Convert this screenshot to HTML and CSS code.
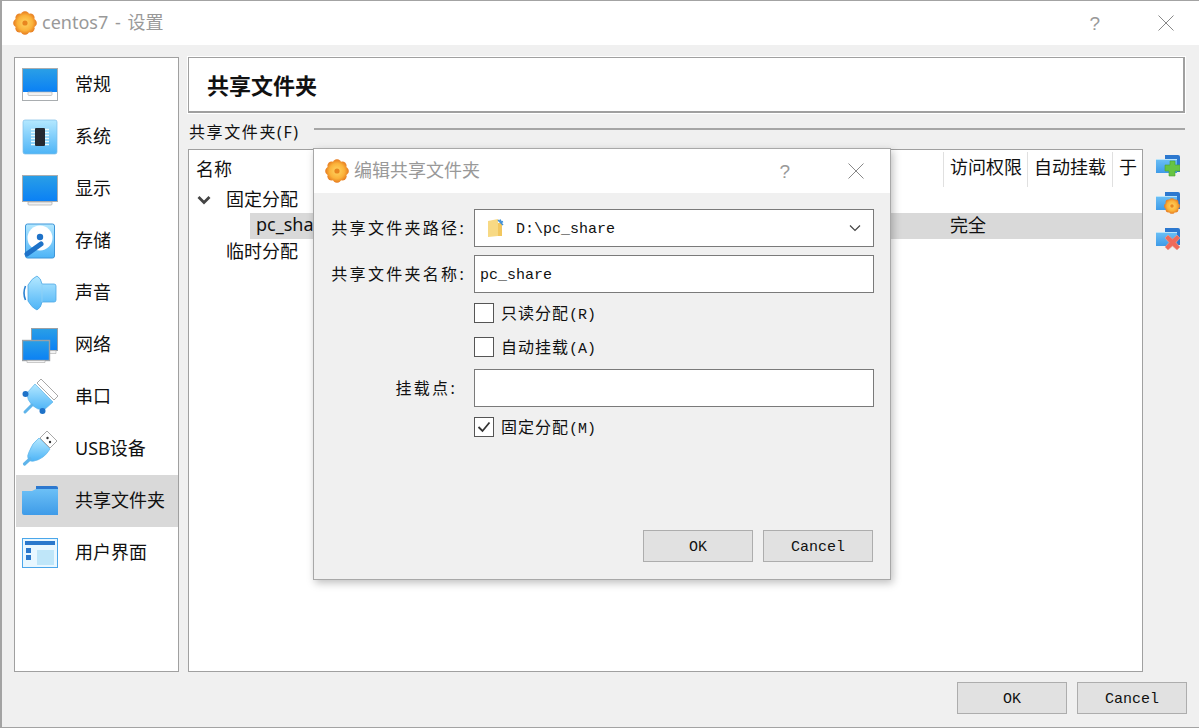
FILE: index.html
```html
<!DOCTYPE html>
<html lang="zh-CN">

<head>
  <meta charset="UTF-8">
  <title>centos7 - 设置</title>
  <link rel="stylesheet" href="styles.css">
</head>

<body>
  <svg class="defs" width="0" height="0">
    <defs>
      <linearGradient id="screen" x1="0" y1="0" x2="0" y2="1">
        <stop offset="0" stop-color="#2a9fe6" />
        <stop offset="1" stop-color="#0a80f5" />
      </linearGradient>
      <linearGradient id="light" x1="0" y1="0" x2="0" y2="1">
        <stop offset="0" stop-color="#b4e8ff" />
        <stop offset="1" stop-color="#4db4f7" />
      </linearGradient>
      <linearGradient id="folderfront" x1="0" y1="0" x2="0" y2="1">
        <stop offset="0" stop-color="#6cc0f6" />
        <stop offset="1" stop-color="#3e9be8" />
      </linearGradient>
      <radialGradient id="petal" gradientUnits="userSpaceOnUse" cx="12" cy="12" r="12.500">
        <stop offset="0" stop-color="#ffd663" />
        <stop offset="0.6" stop-color="#fbb23a" />
        <stop offset="1" stop-color="#e2701a" />
      </radialGradient>
      <symbol id="gear" viewBox="0 0 24 24">
        <g fill="url(#petal)">
          <circle cx="12" cy="12" r="10" />
          <circle cx="12" cy="4.500" r="4.300" />
          <circle cx="12" cy="19.500" r="4.300" />
          <circle cx="4.500" cy="12" r="4.300" />
          <circle cx="19.500" cy="12" r="4.300" />
          <circle cx="6.700" cy="6.700" r="4.300" />
          <circle cx="17.300" cy="6.700" r="4.300" />
          <circle cx="6.700" cy="17.300" r="4.300" />
          <circle cx="17.300" cy="17.300" r="4.300" />
        </g>
        <circle cx="12" cy="12" r="2.600" fill="#e8861f" />
      </symbol>
      <symbol id="toolfolder" viewBox="0 0 24 24">
        <path d="M9 2h13q2 0 2 2v15H9z" fill="#2c78cf" />
        <path d="M0 6h21v14H0z" fill="url(#folderfront)" />
        <path d="M0 6h21v1H0z" fill="#b8e4fb" />
      </symbol>
    </defs>
  </svg>

  <div class="window">
    <header class="titlebar">
      <svg class="appicon"><use href="#gear" /></svg>
      <span class="title">centos7 - 设置</span>
      <span class="help">?</span>
      <svg class="close" viewBox="0 0 16 16"><path d="M0.500 0.500l15 15M15.500 0.500l-15 15" /></svg>
    </header>

    <div class="content">
      <nav class="sidebar">
        <div class="navitem">
          <svg class="navicon" viewBox="0 0 36 36">
            <rect x="0.500" y="1.500" width="35" height="32" fill="#fff" stroke="#a9adb0" />
            <rect x="1" y="2" width="34" height="23" fill="url(#screen)" />
            <path d="M6 25h24v2.500q0 1-1 1H7q-1 0-1-1z" fill="#f2f2f2" stroke="#b5b5b5" stroke-width="0.700" />
          </svg>
          <span>常规</span>
        </div>
        <div class="navitem">
          <svg class="navicon" viewBox="0 0 36 36">
            <rect x="1" y="1" width="34" height="34" rx="2" fill="url(#light)" stroke="#7fbde6" stroke-width="0.700" />
            <path d="M9 10.500h18M9 13.500h18M9 16.500h18M9 19.500h18M9 22.500h18M9 25.500h18" stroke="#e8fbff" stroke-width="1.600" />
            <rect x="13" y="9" width="10" height="18" rx="1" fill="#252a33" />
          </svg>
          <span>系统</span>
        </div>
        <div class="navitem">
          <svg class="navicon" viewBox="0 0 36 36">
            <rect x="0.500" y="4.500" width="35" height="26" fill="url(#screen)" stroke="#a9adb0" />
            <path d="M6 31h24v2q0 1-1 1H7q-1 0-1-1z" fill="#f2f2f2" stroke="#aaa" stroke-width="0.700" />
          </svg>
          <span>显示</span>
        </div>
        <div class="navitem">
          <svg class="navicon" viewBox="0 0 36 36">
            <rect x="3.500" y="1" width="29" height="34" rx="2" fill="url(#light)" stroke="#3e95d8" />
            <circle cx="18" cy="15" r="12.500" fill="#fff" />
            <circle cx="18" cy="14" r="3.200" fill="#1e72c8" />
            <path d="M5 31L19 21" stroke="#1e72c8" stroke-width="5" stroke-linecap="round" />
          </svg>
          <span>存储</span>
        </div>
        <div class="navitem">
          <svg class="navicon" viewBox="0 0 36 36">
            <path d="M3.500 11Q0.500 18 3.500 25" fill="none" stroke="#2a80d0" stroke-width="1.600" />
            <path d="M15 1Q10 3 6 10V26Q10 33 15 35Q19 33 20 27H32Q34 27 34 25V11Q34 9 32 9H20Q19 3 15 1Z" fill="url(#light)" stroke="#4fa8e4" stroke-width="0.800" />
            <path d="M20 9V27" stroke="#8fd0f5" stroke-width="0.800" />
          </svg>
          <span>声音</span>
        </div>
        <div class="navitem">
          <svg class="navicon" viewBox="0 0 36 36">
            <rect x="9.500" y="1.500" width="26" height="22" fill="url(#screen)" stroke="#9aa0a5" />
            <path d="M27 23.500h7v3h-7z" fill="#f2f2f2" stroke="#aaa" stroke-width="0.600" />
            <rect x="0.500" y="13.500" width="27" height="20" fill="url(#screen)" stroke="#9aa0a5" stroke-width="1.400" />
            <path d="M5 33.500h18v2H5z" fill="#f2f2f2" stroke="#aaa" stroke-width="0.600" />
          </svg>
          <span>网络</span>
        </div>
        <div class="navitem">
          <svg class="navicon" viewBox="0 0 36 36">
            <path d="M19 0L36 17L32 21L15 4Z" fill="#fff" stroke="#a8a8a8" />
            <path d="M13 5L31 23L22 31Q15 31 10 26Q5 21 5 14Z" fill="url(#light)" stroke="#5fb4ea" stroke-width="0.700" />
            <path d="M10 26L3 33" stroke="#5fb4ea" stroke-width="3" stroke-linecap="round" />
            <circle cx="3.500" cy="15" r="3" fill="#1e72c8" />
            <circle cx="20.500" cy="32" r="3" fill="#1e72c8" />
          </svg>
          <span>串口</span>
        </div>
        <div class="navitem">
          <svg class="navicon" viewBox="0 0 36 36">
            <path d="M25 0L35 10L28 17L18 7Z" fill="#fff" stroke="#a8a8a8" />
            <circle cx="25.500" cy="7" r="1.200" fill="#333" />
            <circle cx="28" cy="11" r="1.200" fill="#333" />
            <path d="M17 7L28 18Q22 28 12 30Q7 31 6 27Q5 25 7 21Q10 12 17 7Z" fill="url(#light)" stroke="#5fb4ea" stroke-width="0.700" />
            <path d="M8 28L2.500 33" stroke="#5fb4ea" stroke-width="3.200" stroke-linecap="round" />
          </svg>
          <span>USB设备</span>
        </div>
        <div class="navitem selected">
          <svg class="navicon" viewBox="0 0 36 36">
            <path d="M14 3h20q2 0 2 2v27H14z" fill="#2c78cf" />
            <path d="M0 8h10l4-2h22v26H2q-2 0-2-2z" fill="url(#folderfront)" />
          </svg>
          <span>共享文件夹</span>
        </div>
        <div class="navitem">
          <svg class="navicon" viewBox="0 0 36 36">
            <rect x="0.500" y="3.500" width="35" height="29" fill="#e8f7ff" stroke="#4ba6ea" />
            <rect x="3" y="6" width="30" height="4" fill="#2a78cc" />
            <rect x="4" y="13" width="5" height="5" fill="#2a78cc" />
            <rect x="4" y="20" width="5" height="5" fill="#2a78cc" />
            <rect x="15" y="15" width="17" height="15" fill="#bfe6f9" />
          </svg>
          <span>用户界面</span>
        </div>
      </nav>

      <main class="main">
        <div class="pagehead">共享文件夹</div>
        <div class="section">
          <span class="sectionlabel">共享文件夹(F)</span>
          <span class="sectionline"></span>
        </div>
        <div class="tablewrap">
          <div class="sharetable">
            <div class="row headrow">
              <span class="col-name">名称</span>
              <span class="col-access">访问权限</span>
              <span class="col-auto">自动挂载</span>
              <span class="col-at">于</span>
            </div>
            <div class="row">
              <svg class="arrow" viewBox="0 0 14 10"><path d="M1.500 2L7 7.500L12.500 2" /></svg>
              <span class="group">固定分配</span>
            </div>
            <div class="row">
              <div class="selrow">
                <span class="sharename">pc_share</span>
                <span class="col-access">完全</span>
              </div>
            </div>
            <div class="row">
              <span class="group nogap">临时分配</span>
            </div>
          </div>
          <div class="toolbar">
            <svg class="toolicon" viewBox="0 0 24 24">
              <use href="#toolfolder" />
              <path d="M14 8h5v4h5v6h-5v5h-6v-5H9v-6h5z" fill="#66c443" stroke="#4da52f" stroke-width="0.600" />
            </svg>
            <svg class="toolicon" viewBox="0 0 24 24">
              <use href="#toolfolder" />
              <use href="#gear" x="8" y="8" width="16" height="16" />
            </svg>
            <svg class="toolicon" viewBox="0 0 24 24">
              <use href="#toolfolder" />
              <path d="M12 9l4.500 4L21 9l3 3-4 4.500 4 4.500-3 3-4.500-4-4.500 4-3-3 4-4.500-4-4.500z" fill="#ef6a5a" stroke="#e8a595" stroke-width="0.600" />
            </svg>
          </div>
        </div>
        <div class="footer">
          <button class="btn">OK</button>
          <button class="btn">Cancel</button>
        </div>
      </main>
    </div>

    <div class="dialog">
      <header class="dialoghead">
        <svg class="dialogicon"><use href="#gear" /></svg>
        <span class="dialogtitle">编辑共享文件夹</span>
        <span class="help">?</span>
        <svg class="close" viewBox="0 0 16 16"><path d="M0.500 0.500l15 15M15.500 0.500l-15 15" /></svg>
      </header>
      <div class="dialogbody">
        <div class="field">
          <label>共享文件夹路径:</label>
          <div class="input combo">
            <svg class="fileicon" viewBox="0 0 18 20">
              <path d="M1 3l10-2v17L1 19z" fill="#f7d984" />
              <path d="M11 5h4v13h-4z" fill="#f2c75f" />
              <path d="M11 2l5 5M13 1.500l1 2M16 3.500l-2 1" stroke="#3f8fd8" stroke-width="1.500" fill="none" />
            </svg>
            <span>D:\pc_share</span>
            <svg class="chevron" viewBox="0 0 12 8"><path d="M1 1.500L6 6.500L11 1.500" /></svg>
          </div>
        </div>
        <div class="field">
          <label>共享文件夹名称:</label>
          <div class="input">pc_share</div>
        </div>
        <div class="checkrow">
          <span class="checkbox"></span>
          <span>只读分配<i>(R)</i></span>
        </div>
        <div class="checkrow">
          <span class="checkbox"></span>
          <span>自动挂载<i>(A)</i></span>
        </div>
        <div class="field mount">
          <label>挂载点:</label>
          <div class="input"></div>
        </div>
        <div class="checkrow">
          <span class="checkbox">
            <svg viewBox="0 0 18 18"><path d="M3.500 9L7.500 13L14.500 4.500" /></svg>
          </span>
          <span>固定分配<i>(M)</i></span>
        </div>
      </div>
      <div class="dialogfoot">
        <button class="btn">OK</button>
        <button class="btn">Cancel</button>
      </div>
    </div>
  </div>
</body>

</html>
```

FILE: styles.css
```css
html, body {
  margin: 0;
  height: 100%;
  background-color: #f0f0f0;
  overflow: hidden;
}

body {
  font-family: "Noto Sans", "Noto Sans CJK SC", sans-serif;
  font-size: 18px;
  color: #111;
}

.defs {
  position: absolute;
}

.window {
  position: relative;
  box-sizing: border-box;
  height: 728px;
  display: flex;
  flex-direction: column;
  border-top: 1px solid #a3a3a3;
  border-bottom: 1px solid #a3a3a3;
  border-left: 2px solid #a3a3a3;
}

/* title bars */
.titlebar {
  flex: none;
  height: 44px;
  background: #fff;
  display: flex;
  align-items: center;
  padding-left: 11px;
}

.appicon {
  width: 24px;
  height: 24px;
  margin-right: 5px;
}

.title {
  color: #999;
  font-size: 18px;
  word-spacing: 2px;
  padding-bottom: 4px;
  flex: 1;
}

.help {
  color: #999;
  font-size: 19px;
  font-family: "Liberation Sans", sans-serif;
  margin-right: 58px;
  padding-top: 1px;
}

.close {
  width: 16px;
  height: 16px;
  margin-right: 25px;
}

.close path {
  stroke: #888;
  fill: none;
  stroke-width: 1;
}

.content {
  flex: 1;
  display: flex;
  padding: 12px;
  gap: 9px;
}

/* left list */
.sidebar {
  flex: none;
  box-sizing: border-box;
  width: 165px;
  height: 615px;
  background: #fff;
  border: 1px solid #a0a0a0;
  padding: 1px 0 1px 1px;
}

.navitem {
  height: 52px;
  display: flex;
  align-items: center;
  padding-left: 6px;
  gap: 17px;
}

.navitem span {
  padding-bottom: 5px;
}

.navitem.selected {
  background: #d9d9d9;
}

.navicon {
  width: 36px;
  height: 36px;
  flex: none;
}

/* right side */
.main {
  flex: 1;
  min-width: 0;
  display: flex;
  flex-direction: column;
}

.pagehead {
  flex: none;
  box-sizing: border-box;
  height: 56px;
  margin-right: 2px;
  background: #fff;
  border: 1px solid #a0a0a0;
  border-width: 1px 2px 2px 1px;
  outline: 1px solid #fff;
  padding-left: 18px;
  font-size: 22px;
  font-weight: 700;
  line-height: 54px;
}

.section {
  flex: none;
  height: 36px;
  display: flex;
  align-items: center;
}

.sectionlabel {
  font-size: 16px;
  letter-spacing: 1.600px;
  width: 126px;
  padding-left: 1px;
  box-sizing: border-box;
  flex: none;
  white-space: nowrap;
}

.sectionline {
  flex: 1;
  height: 2px;
  margin: 0 2px 4px 0;
  background: #a6a6a6;
}

.tablewrap {
  flex: none;
  height: 523px;
  display: flex;
}

.sharetable {
  box-sizing: border-box;
  width: 955px;
  background: #fff;
  border: 1px solid #a0a0a0;
  padding-top: 2px;
}

.row {
  height: 26px;
  display: flex;
  align-items: center;
  white-space: nowrap;
}

.row span {
  padding-bottom: 4px;
}

.headrow {
  height: 35px;
  padding-left: 7px;
}

.col-name {
  width: 747px;
}

.col-access,
.col-auto,
.col-at {
  box-sizing: border-box;
  padding-left: 6px;
  height: 35px;
  line-height: 31px;
  border-left: 1px solid #e0e0e0;
}

.col-access {
  width: 84px;
}

.col-auto {
  width: 85px;
}

.col-at {
  width: 30px;
}

.arrow {
  width: 14px;
  height: 10px;
  margin-left: 8px;
  margin-right: 15px;
  margin-bottom: 1px;
}

.arrow path {
  fill: none;
  stroke: #444;
  stroke-width: 2.800;
}

.nogap {
  margin-left: 37px;
}

.selrow {
  margin-left: 61px;
  flex: 1;
  height: 26px;
  display: flex;
  align-items: center;
  background: #d9d9d9;
}

.sharename {
  width: 693px;
  padding-left: 6px;
  box-sizing: border-box;
}

.selrow .col-access {
  border-left: none;
  padding: 0 0 4px 7px;
  height: auto;
  line-height: normal;
}

.toolbar {
  flex: 1;
  display: flex;
  flex-direction: column;
  align-items: center;
  padding-top: 4px;
  padding-left: 6px;
  gap: 12.500px;
}

.toolicon {
  width: 24px;
  height: 24px;
}

.footer {
  flex: none;
  display: flex;
  justify-content: flex-end;
  gap: 10px;
  padding-top: 10px;
}

.btn {
  box-sizing: border-box;
  width: 110px;
  height: 32px;
  padding: 2px 0 0;
  background: #e1e1e1;
  border: 1px solid #adadad;
  font-family: "Liberation Mono", monospace;
  font-size: 15px;
  color: #111;
}

/* modal dialog */
.dialog {
  position: absolute;
  left: 311px;
  top: 147px;
  box-sizing: border-box;
  width: 578px;
  height: 432px;
  display: flex;
  flex-direction: column;
  background: #f0f0f0;
  border: 1px solid #a8a8a8;
  box-shadow: 2px 3px 8px rgba(0, 0, 0, 0.25);
}

.dialoghead {
  flex: none;
  height: 44px;
  display: flex;
  align-items: center;
  background: #fff;
  padding-left: 11px;
}

.dialoghead .close {
  margin-right: 26px;
}

.dialogicon {
  width: 24px;
  height: 24px;
  margin-right: 5px;
}

.dialogtitle {
  flex: 1;
  color: #999;
  font-size: 18px;
  padding-bottom: 4px;
}

.dialogbody {
  flex: 1;
  padding-top: 12px;
  font-size: 16px;
  letter-spacing: 1px;
}

.field {
  height: 46px;
  display: flex;
  align-items: center;
}

.field label {
  box-sizing: border-box;
  width: 160px;
  flex: none;
  padding: 0 8px 3px 0;
  letter-spacing: 2.300px;
  text-align: right;
  white-space: nowrap;
}

.mount label {
  padding-right: 17px;
}

.input {
  box-sizing: border-box;
  width: 400px;
  height: 38px;
  background: #fff;
  border: 1px solid #7a7a7a;
  display: flex;
  align-items: center;
  padding: 2px 0 0 5px;
  font-family: "Liberation Mono", monospace;
  font-size: 15px;
  letter-spacing: 0;
}

.combo {
  padding-left: 12px;
}

.fileicon {
  width: 18px;
  height: 20px;
  margin: -2px 11px 0 0;
}

.chevron {
  width: 12px;
  height: 8px;
  margin: -2px 12px 0 auto;
}

.chevron path {
  fill: none;
  stroke: #444;
  stroke-width: 1.200;
}

.checkrow {
  box-sizing: border-box;
  height: 34px;
  padding: 0 0 2px 160px;
  display: flex;
  align-items: center;
  gap: 7px;
}

.checkrow span:last-child {
  padding-bottom: 2px;
}

.checkrow i {
  font-family: "Liberation Mono", monospace;
  font-style: normal;
  font-size: 15px;
  letter-spacing: 0;
}

.checkbox {
  box-sizing: border-box;
  width: 20px;
  height: 20px;
  background: #fff;
  border: 1px solid #555;
}

.checkbox svg {
  display: block;
}

.checkbox path {
  fill: none;
  stroke: #333;
  stroke-width: 1.800;
}

.dialogfoot {
  flex: none;
  display: flex;
  justify-content: flex-end;
  gap: 10px;
  padding: 0 17px 17px 0;
}
```
